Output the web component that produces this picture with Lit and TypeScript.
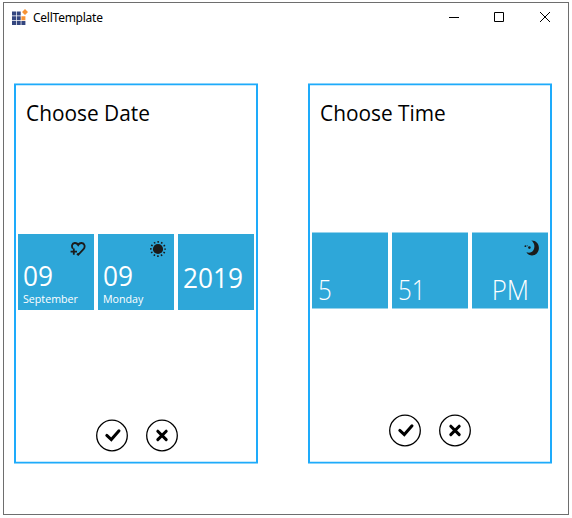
import { LitElement, html, css, svg } from "lit";
import { customElement, property } from "lit/decorators.js";

const heart = svg`<path d="M2.8 7.6C1.2 5 2 2.3 4.7 2C6.6 1.8 7.7 3.1 8.2 4C8.8 2.9 10 1.9 11.6 2C14.6 2.3 15.6 5.6 13.5 8.2L8.2 13.8L7 12.8M.6 10.6H7M3.8 7.4V13.8" fill="none" stroke="#1b1b1b" stroke-width="1.8"/>`;
const sun = svg`<circle cx="8" cy="8" r="5.1" fill="#1b1b1b"/><circle cx="8" cy="8" r="7.1" fill="none" stroke="#1b1b1b" stroke-width="1.7" stroke-dasharray="1.6 2.117" stroke-dashoffset=".8"/>`;
const moon = svg`<path d="M7.3 .6C12 .5 15 3.8 14.9 8C14.8 12.7 11.6 15.5 7.9 15.4C5.3 15.3 3.4 14 2.4 12.2C5.2 13.3 8.1 12.5 9.5 10C11.4 6.7 10.3 2.7 7.3 .6Z" fill="#1b1b1b"/><circle cx="5.4" cy="7.6" r="1.3" fill="#1b1b1b"/><circle cx="1.4" cy="6.2" r=".9" fill="#1b1b1b"/><circle cx="3.2" cy="5.8" r=".5" fill="#1b1b1b"/>`;
const icons: Record<string, unknown> = { heart, sun, moon };

interface Cell { value: string; caption?: string; icon?: string; kind: string; }

@customElement("picker-panel")
export class PickerPanel extends LitElement {
  @property() heading = "";
  @property() variant = "date";
  @property({ attribute: false }) cells: Cell[] = [];

  static styles = css`
    :host { display: block; width: 244px; height: 381px; }
    .panel {
      box-sizing: border-box; width: 244px; height: 381px; padding: 0 4px;
      display: flex; flex-direction: column;
      background:
        linear-gradient(#1eabfb, #1eabfb) 0 1px / 2px 379px no-repeat,
        linear-gradient(#1eabfb, #1eabfb) 100% 1px / 2px 379px no-repeat,
        linear-gradient(#8bd3fb 0 1px, #1eabfb 1px 2px, #c5e9fd 2px 3px) 0 0 / 100% 3px no-repeat,
        linear-gradient(#c5e9fd 0 1px, #1eabfb 1px 2px, #8bd3fb 2px 3px) 0 100% / 100% 3px no-repeat, #fff;
    }
    .heading { height: 60px; padding-left: 8px; margin-bottom: 91px; font-family: "Open Sans", "Noto Sans", sans-serif; font-size: 21.6px; line-height: 60px; color: #000; white-space: nowrap; transform: scaleX(.965); transform-origin: 8px 0; }
    .cells { display: flex; gap: 4px; }
    .time .cells { margin-top: -2px; }
    .cell { box-sizing: border-box; width: 76px; height: 76px; padding: 7px 0 0 5px; background: #2ea7d9; color: #fff; display: flex; flex-direction: column; white-space: nowrap; }
    .time .cell { height: 77px; padding-top: 8px; background: linear-gradient(#96d3ec 0 1px, #2ea7d9 1px 76px, #96d3ec 76px); }
    .icon { height: 17px; padding-right: 8px; display: flex; justify-content: flex-end; }
    .value { height: 35px; line-height: 35px; font-family: "Open Sans", "Noto Sans", sans-serif; font-size: 27.6px; transform: scaleX(.95); transform-origin: 0 0; }
    .caption { font-family: "Open Sans", "Noto Sans", sans-serif; font-size: 11.6px; line-height: 12px; transform: scaleX(.92); transform-origin: 0 0; }
    .year .value { margin-top: 2px; }
    .time .value { line-height: 36px; font-size: 28px; font-weight: 300; margin: 14px 0 0 1px; transform: scaleX(.86); }
    .time .period .value { padding-left: 15px; transform: scaleX(.92); }
    .actions { display: flex; gap: 18px; margin: 109px 0 0 78px; }
    .time .actions { margin: 105px 0 0 77px; }
    .action { width: 32px; height: 33px; display: block; }
  `;

  render() {
    return html`<section class="panel ${this.variant}">
      <div class="heading">${this.heading}</div>
      <div class="cells">${this.cells.map((c) => html`<div class="cell ${c.kind}">
        <div class="icon">${c.icon ? html`<svg width="16" height="16" viewBox="0 0 16 16">${icons[c.icon]}</svg>` : ""}</div>
        <div class="value">${c.value}</div>
        ${c.caption ? html`<div class="caption">${c.caption}</div>` : ""}
      </div>`)}</div>
      <div class="actions">
        <svg class="action" viewBox="0 0 32 33"><circle cx="16" cy="16.5" r="15.3" fill="#fff" stroke="#000" stroke-width="1.3"/><path d="M10.8 16.4L15.3 20.5L23 11.8" fill="none" stroke="#000" stroke-width="3" stroke-linecap="round"/></svg>
        <svg class="action" viewBox="0 0 32 33"><circle cx="16" cy="16.5" r="15.3" fill="#fff" stroke="#000" stroke-width="1.3"/><path d="M11.8 12.2L20.2 20.6M20.2 12.2L11.8 20.6" stroke="#000" stroke-width="3" stroke-linecap="round"/></svg>
      </div>
    </section>`;
  }
}

@customElement("app-root")
export class AppRoot extends LitElement {
  static styles = css`
    :host { display: block; box-sizing: border-box; width: 572px; height: 518px; padding: 2px 3px; background: #fff; font-family: "Noto Sans", "Open Sans", sans-serif; }
    .window { box-sizing: border-box; width: 566px; height: 513px; border: 1px solid #6e6e6e; }
    .bar { height: 28px; display: flex; align-items: center; padding: 0 17px 0 8px; }
    .logo { display: block; margin-top: 1px; }
    .title { font-size: 12px; line-height: 20px; margin: 2px 0 0 5px; flex: 1; color: #000; letter-spacing: -0.25px; }
    .controls { display: block; }
    .content { display: flex; gap: 50px; padding: 52px 0 0 10px; }
  `;

  private date: Cell[] = [
    { value: "09", caption: "September", icon: "heart", kind: "month" },
    { value: "09", caption: "Monday", icon: "sun", kind: "day" },
    { value: "2019", kind: "year" },
  ];
  private time: Cell[] = [
    { value: "5", kind: "hour" },
    { value: "51", kind: "minute" },
    { value: "PM", icon: "moon", kind: "period" },
  ];

  render() {
    return html`<div class="window">
      <header class="bar">
        <svg class="logo" width="16" height="17" viewBox="0 0 16 17">
          <g fill="#34467f"><path d="M0 2.5h4v4H0zM4.7 2.5h4v4h-4zM0 7.2h4v4H0zM4.7 7.2h4v4h-4zM0 11.9h4v4H0zM4.7 11.9h4v4h-4zM9.4 11.9h4v4h-4z"/></g>
          <path d="M13 0L16 3L13 6L10 3zM9.4 7.2h4v4h-4z" fill="#f79334"/>
        </svg>
        <span class="title">CellTemplate</span>
        <svg class="controls" width="102" height="12" viewBox="0 0 102 12" fill="none" stroke="#000">
          <path d="M0 6.5H10M45.5 1.5H54.5V10.5H45.5ZM91 1L101 11M101 1L91 11"/>
        </svg>
      </header>
      <main class="content">
        <picker-panel heading="Choose Date" variant="date" .cells=${this.date}></picker-panel>
        <picker-panel heading="Choose Time" variant="time" .cells=${this.time}></picker-panel>
      </main>
    </div>`;
  }
}
